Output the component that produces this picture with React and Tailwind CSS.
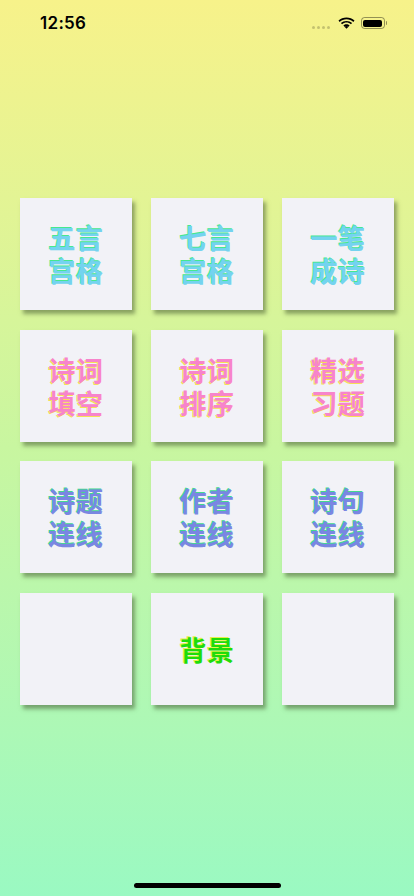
import React from 'react';

const TILES = [
  { lines: ['五言', '宫格'], tone: 'cyan' },
  { lines: ['七言', '宫格'], tone: 'cyan' },
  { lines: ['一笔', '成诗'], tone: 'cyan' },
  { lines: ['诗词', '填空'], tone: 'pink' },
  { lines: ['诗词', '排序'], tone: 'pink' },
  { lines: ['精选', '习题'], tone: 'pink' },
  { lines: ['诗题', '连线'], tone: 'blue' },
  { lines: ['作者', '连线'], tone: 'blue' },
  { lines: ['诗句', '连线'], tone: 'blue' },
  { lines: [], tone: 'none' },
  { lines: ['背景'], tone: 'green' },
  { lines: [], tone: 'none' },
];

const TONES = {
  cyan: 'text-[#74d3ef] [text-shadow:-1px_-1px_0_#46e88e]',
  pink: 'text-[#f784cb] [text-shadow:-1px_1px_0_#f6df55]',
  blue: 'text-[#7a86e2] [text-shadow:-1px_-1px_0_#43d98e]',
  green: 'text-[#1fdc0a] [text-shadow:-1px_-1px_0_#e8f04a]',
  none: '',
};

function StatusBar() {
  return (
    <div className="flex items-center justify-between h-[46px] pl-[40px] pr-[27px]">
      <span className="text-[17px] font-semibold text-black tracking-[0.3px] mt-[1px] font-['Inter','Liberation_Sans',sans-serif]">
        12:56
      </span>
      <div className="flex items-center gap-[6px]">
        <div className="flex items-end gap-[2px] mr-[2px] mt-[8px]">
          {[0, 1, 2, 3].map((i) => (
            <span key={i} className="w-[3px] h-[3px] rounded-full bg-black/20" />
          ))}
        </div>
        <svg width="17" height="12" viewBox="0 0 17 12">
          <path d="M8.5 2.2c2.6 0 5 1 6.8 2.7l1.2-1.3C14.4 1.6 11.6.5 8.5.5S2.6 1.6.5 3.6l1.2 1.3C3.5 3.2 5.9 2.2 8.5 2.2z" fill="#000" />
          <path d="M8.5 5.6c1.7 0 3.2.6 4.4 1.7l1.2-1.3C12.6 4.6 10.6 3.9 8.5 3.9S4.4 4.6 2.9 6l1.2 1.3c1.2-1.1 2.7-1.7 4.4-1.7z" fill="#000" />
          <path d="M8.5 8.9c.8 0 1.5.3 2 .8L8.5 11.8 6.5 9.7c.5-.5 1.2-.8 2-.8z" fill="#000" />
          <path d="M8.5 7.3c1.2 0 2.3.5 3.1 1.2l-1.1 1.2c-.5-.5-1.2-.8-2-.8s-1.5.3-2 .8L5.4 8.5c.8-.7 1.9-1.2 3.1-1.2z" fill="#000" />
        </svg>
        <div className="flex items-center">
          <div className="w-[24px] h-[12px] rounded-[3.5px] border border-black/40 p-[1.5px]">
            <div className="w-full h-full rounded-[2px] bg-black" />
          </div>
          <div className="w-[1.5px] h-[4px] rounded-r-sm bg-black/40 ml-[1px]" />
        </div>
      </div>
    </div>
  );
}

function Tile({ lines, tone }) {
  return (
    <div className="w-[112px] h-[112px] bg-[#f2f2f7] shadow-[3px_4px_4px_rgba(60,80,40,0.5)] flex items-center justify-center">
      {lines.length > 0 && (
        <p
          className={`text-center text-[27px] leading-[33px] font-bold tracking-[0.5px] font-['Noto_Sans_CJK_SC',sans-serif] ${TONES[tone]}`}
        >
          {lines.map((l, i) => (
            <React.Fragment key={l}>
              {i > 0 && <br />}
              {l}
            </React.Fragment>
          ))}
        </p>
      )}
    </div>
  );
}

export default function App() {
  return (
    <div className="w-[414px] h-[896px] flex flex-col bg-gradient-to-b from-[#f7f28a] via-[#c8f6a0] to-[#9af9c2] relative overflow-hidden">
      <StatusBar />
      <div className="grid grid-cols-3 gap-x-[19px] gap-y-[19.7px] px-[20px] mt-[152px]">
        {TILES.map((t, i) => (
          <Tile key={i} lines={t.lines} tone={t.tone} />
        ))}
      </div>
      <div className="mt-auto mb-[8px] flex justify-center">
        <div className="w-[147px] h-[5px] rounded-full bg-black" />
      </div>
    </div>
  );
}
